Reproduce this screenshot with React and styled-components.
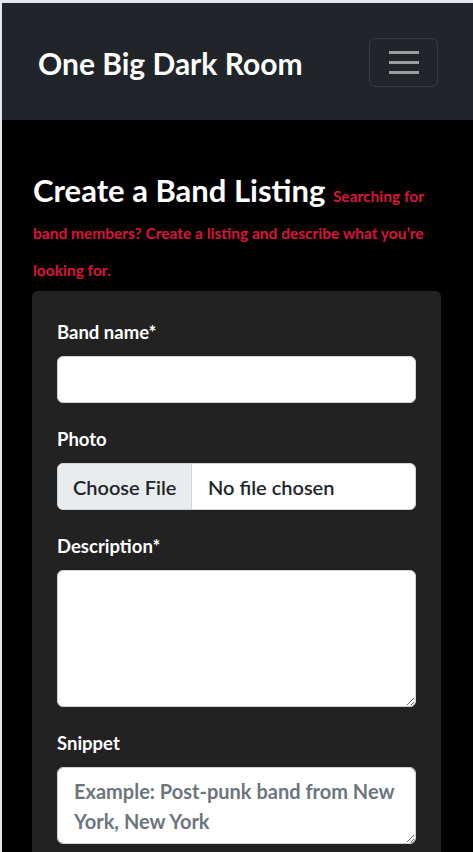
import React, { useState } from "react";
import styled, { createGlobalStyle } from "styled-components";

const GlobalStyle = createGlobalStyle`
  html {
    background: #e4e7eb;
  }
  body {
    margin: 0;
    padding: 3px 0 0 2px;
    background: #e4e7eb;
    font-family: Lato, "Noto Sans", sans-serif;
  }
  * {
    box-sizing: border-box;
  }
`;

const CreateBand = () => {
  const [fields, setFields] = useState({ name: "", description: "", snippet: "" });

  const handleChange = (e) => {
    setFields({ ...fields, [e.target.name]: e.target.value });
  };

  return (
    <StyledPage>
      <GlobalStyle />
      <StyledNavbar>
        <StyledBrand href="#">One Big Dark Room</StyledBrand>
        <StyledToggler aria-label="Toggle navigation">
          <span />
          <span />
          <span />
        </StyledToggler>
      </StyledNavbar>
      <StyledMain>
        <StyledHeading>
          Create a Band Listing{" "}
          <StyledLead>
            Searching for band members? Create a listing and describe what you’re
            looking for.
          </StyledLead>
        </StyledHeading>
        <StyledCard>
          <StyledLabel>Band name*</StyledLabel>
          <StyledInput name="name" value={fields.name} onChange={handleChange} />

          <StyledLabel>Photo</StyledLabel>
          <StyledFileBox>
            <StyledFileButton>Choose File</StyledFileButton>
            <StyledFileName>No file chosen</StyledFileName>
          </StyledFileBox>

          <StyledLabel>Description*</StyledLabel>
          <StyledTextarea
            name="description"
            value={fields.description}
            onChange={handleChange}
            height={137}
          />

          <StyledLabel>Snippet</StyledLabel>
          <StyledTextarea
            name="snippet"
            value={fields.snippet}
            onChange={handleChange}
            height={77}
            placeholder="Example: Post-punk band from New York, New York"
          />
        </StyledCard>
      </StyledMain>
    </StyledPage>
  );
};

export default CreateBand;

//styles

const StyledPage = styled.div`
  background: #000;
  min-height: 849px;
`;

const StyledNavbar = styled.nav`
  display: flex;
  align-items: center;
  justify-content: space-between;
  height: 117px;
  padding: 0 35px 0 36px;
  background: #212529;
`;

const StyledBrand = styled.a`
  color: #fff;
  text-decoration: none;
  font-size: 30px;
  font-weight: 700;
  margin-top: 3px;
`;

const StyledToggler = styled.button`
  display: flex;
  flex-direction: column;
  align-items: center;
  justify-content: center;
  gap: 7px;
  width: 69px;
  height: 49px;
  margin-top: 1px;
  background: transparent;
  border: 1px solid rgba(255, 255, 255, 0.1);
  border-radius: 6px;

  span {
    display: block;
    width: 30px;
    height: 3px;
    background: rgba(255, 255, 255, 0.55);
  }
`;

const StyledMain = styled.main`
  padding: 52px 32px 0 30px;
`;

const StyledHeading = styled.h1`
  margin: 0 0 8px 1px;
  color: #fff;
  font-size: 31px;
  font-weight: 700;
  line-height: 37px;
`;

const StyledLead = styled.span`
  color: #dc143c;
  font-size: 15.5px;
  font-weight: 700;
  line-height: 1;
`;

const StyledCard = styled.section`
  display: flex;
  flex-direction: column;
  background: #222;
  border-radius: 6px;
  padding: 28px 25px 20px 25px;
`;

const StyledLabel = styled.label`
  display: block;
  color: #fff;
  font-size: 18.5px;
  font-weight: 700;
  line-height: 27px;
  margin-bottom: 10px;
`;

const StyledInput = styled.input`
  display: block;
  width: 100%;
  height: 47px;
  margin-bottom: 23px;
  padding: 8px 16px;
  font-family: inherit;
  font-size: 20px;
  color: #212529;
  background: #fff;
  border: 1px solid #ced4da;
  border-radius: 6px;
  outline: none;
`;

const StyledFileBox = styled.div`
  display: flex;
  align-items: stretch;
  height: 47px;
  margin-bottom: 23px;
  background: #fff;
  border: 1px solid #ced4da;
  border-radius: 6px;
  overflow: hidden;
  font-size: 20px;
  font-weight: 600;
  color: #212529;
  white-space: nowrap;
`;

const StyledFileButton = styled.span`
  display: flex;
  align-items: center;
  flex-shrink: 0;
  width: 134px;
  padding: 0 15px;
  background: #e9ecef;
  border-right: 1px solid #ced4da;
`;

const StyledFileName = styled.span`
  display: flex;
  align-items: center;
  padding: 0 16px;
`;

const StyledTextarea = styled.textarea`
  display: block;
  width: 100%;
  height: ${(props) => props.height}px;
  margin-bottom: 23px;
  padding: 8px 16px;
  font-family: inherit;
  font-size: 20px;
  font-weight: 700;
  line-height: 30px;
  color: #212529;
  background: #fff;
  border: 1px solid #ced4da;
  border-radius: 6px;
  outline: none;
  resize: vertical;

  &::placeholder {
    color: #6c757d;
  }
`;
